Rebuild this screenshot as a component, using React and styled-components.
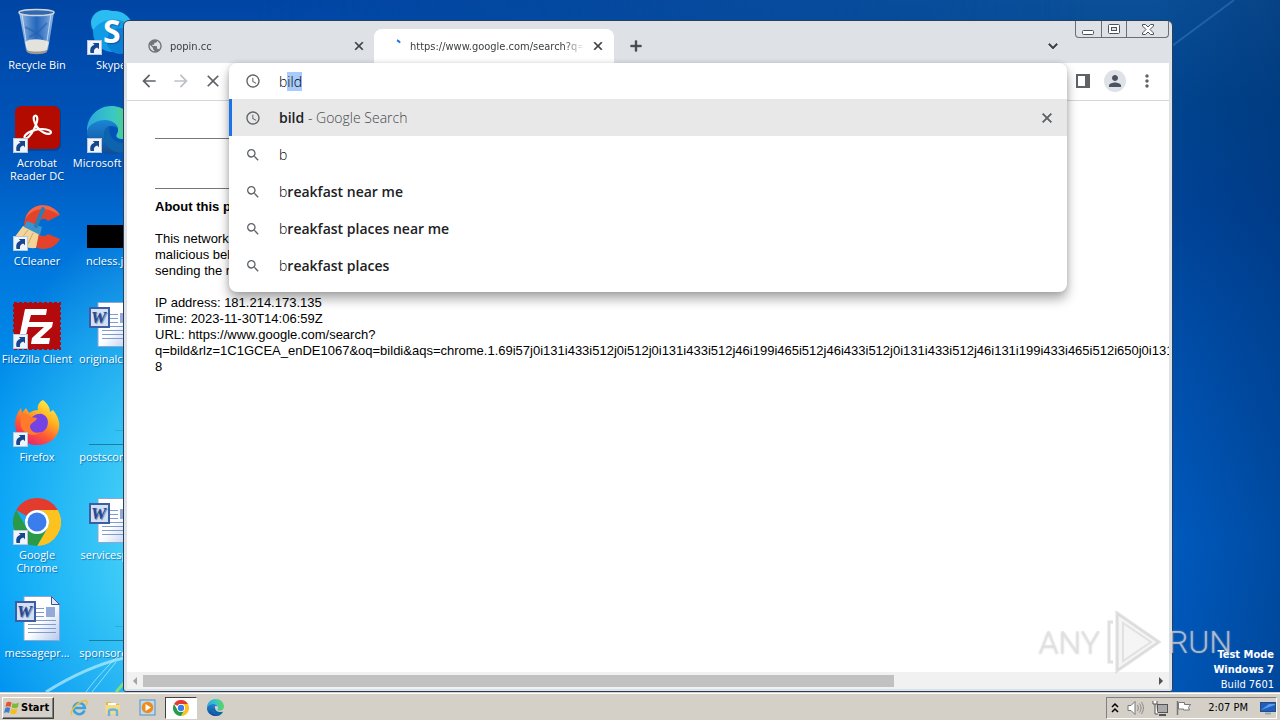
import { useEffect, useRef } from "react";
import styled, { createGlobalStyle } from "styled-components";
import {
  MdAccessTime,
  MdAdd,
  MdArrowBack,
  MdArrowForward,
  MdClose,
  MdExpandMore,
  MdMoreVert,
  MdPerson,
  MdPublic,
  MdSearch,
} from "react-icons/md";

const GlobalStyle = createGlobalStyle`
  * {
    box-sizing: border-box;
  }
  body {
    margin: 0;
    font-family: "DejaVu Sans Condensed", "DejaVu Sans", sans-serif;
    font-size: 11px;
  }
  button, input {
    font: inherit;
    color: inherit;
    border: 0;
    padding: 0;
    background: none;
  }
`;

const Screen = styled.div`
  display: flex;
  flex-direction: column;
  height: 100vh;
  overflow: hidden;
`;

// ---------- desktop ----------

const Desktop = styled.main`
  position: relative;
  flex: 1;
  min-height: 0;
  overflow: hidden;
  background:
    radial-gradient(ellipse 220px 330px at 190px 530px, #5fe0f8 0%, #45d0f6cc 40%, #00a0f800 100%),
    linear-gradient(180deg, #0045a4 0%, #0056bc 22%, #0073da 36%, #0088e8 50%, #009af4 66%, #00a0f8 85%, #0092f0 100%);

  /* the darker right side of the wallpaper */
  &::before {
    content: "";
    position: absolute;
    inset: 0;
    background:
      linear-gradient(90deg, #00000000 90%, #00286055 100%),
      linear-gradient(180deg, #0a4f98 0%, #004590 15%, #00449a 30%, #004fac 48%, #005cc2 78%, #0058ba 100%);
    mask-image: linear-gradient(90deg, transparent 20%, #000 85%);
  }
`;

const Rays = styled.svg`
  position: absolute;
  left: 0;
  bottom: 0;
`;

const Beam = styled.svg`
  position: absolute;
  right: 0;
  top: 0;
`;

const Shortcuts = styled.div`
  position: relative;
  display: grid;
  grid-template-columns: 74px 74px;
  grid-auto-rows: 98px;
  width: 148px;
`;

const Shortcut = styled.a`
  display: flex;
  flex-direction: column;
  align-items: center;
  gap: 2px;
  padding-top: 8px;
  color: #fff;
  font-family: "Open Sans", sans-serif;
  text-align: center;
  text-decoration: none;
  line-height: 13px;
  white-space: pre;
  text-shadow: 1px 1px 1px #003a8099;
  svg {
    display: block;
    flex: none;
  }
`;

const BuildInfo = styled.div`
  position: absolute;
  right: 6px;
  bottom: 0;
  color: #fff;
  line-height: 15px;
  text-align: right;
`;

const Watermark = styled.div`
  position: absolute;
  right: 48px;
  bottom: 18px;
  display: flex;
  align-items: center;
  gap: 4px;
  color: #dededeaa;
  font: 300 32px Roboto, "Liberation Sans", sans-serif;
  text-shadow: 0 0 2px #ffffff66, 0 1px 2px #00000033;
  pointer-events: none;
`;

// ---------- browser window ----------

const Window = styled.section`
  position: absolute;
  top: 20px;
  right: 107px;
  bottom: 0;
  left: 123px;
  display: flex;
  flex-direction: column;
  padding: 0 3px 2px;
  border: 1px solid #27405c;
  border-radius: 6px 6px 3px 3px;
  background: #dee1e6;
`;

const TabStrip = styled.div`
  display: flex;
  align-items: flex-end;
  height: 42px;
  padding-left: 7px;
`;

const Tab = styled.div`
  position: relative;
  display: flex;
  align-items: center;
  width: 240px;
  height: 34px;
  padding: 0 8px 0 13px;
  border-radius: 8px 8px 0 0;
  background: ${(p) => (p.$active ? "#fff" : "transparent")};
  color: #3c4043;
  svg {
    flex: none;
  }
`;

const TabTitle = styled.span`
  flex: 1;
  margin: 0 6px 0 7px;
  overflow: hidden;
  white-space: nowrap;
  mask-image: linear-gradient(90deg, #000 88%, transparent);
`;

const IconButton = styled.button`
  display: flex;
  align-items: center;
  justify-content: center;
  flex: none;
  width: ${(p) => p.$width || 32}px;
  height: ${(p) => p.$height || 32}px;
  color: ${(p) => p.$color || "#5f6368"};
  svg {
    stroke-width: ${(p) => (p.$heavy ? 1 : 0)};
  }
  path[fill="none"] {
    stroke: none;
  }
`;

const Spacer = styled.div`
  flex: 1;
`;

const WindowButtons = styled.div`
  display: flex;
  align-self: flex-start;
  margin-left: 8px;
  border: 1px solid #6b6e78;
  border-top: 0;
  border-radius: 0 0 4px 4px;
  button + button {
    border-left: 1px solid #6b6e78;
  }
  svg {
    stroke-width: 1;
  }
`;

const Toolbar = styled.div`
  display: flex;
  align-items: center;
  flex: none;
  height: 38px;
  padding: 0 6px 1px;
  border-bottom: 1px solid #d5d7da;
  background: #fff;
`;

const Avatar = styled.span`
  display: flex;
  align-items: center;
  justify-content: center;
  width: 22px;
  height: 22px;
  border-radius: 50%;
  background: #dee1e6;
  color: #4a5160;
`;

const Omnibox = styled.div`
  position: relative;
  align-self: stretch;
  flex: 1;
`;

const Popup = styled.div`
  position: absolute;
  z-index: 2;
  top: 0;
  right: 0;
  left: 0;
  padding-bottom: 8px;
  border-radius: 8px;
  background: #fff;
  box-shadow: 0 7px 12px #00000055, 0 0 5px #00000022;
  font-family: "Open Sans", sans-serif;
  font-size: 14px;
  font-weight: 300;
  color: #000;
`;

const SearchRow = styled.label`
  display: flex;
  align-items: center;
  gap: 18px;
  height: 36px;
  padding-left: 16px;
  color: #5f6368;
`;

const SearchInput = styled.input`
  flex: 1;
  color: #000;
  outline: none;
  &::selection {
    background: #a8cbfbfe;
    color: #000;
  }
`;

const Suggestion = styled.div`
  display: flex;
  align-items: center;
  gap: 18px;
  height: 37px;
  padding: 0 4px 0 13px;
  border-left: 3px solid ${(p) => (p.$selected ? "#1a73e8" : "transparent")};
  background: ${(p) => (p.$selected ? "#e8e8e8" : "transparent")};
  svg {
    flex: none;
    color: #5f6368;
  }
`;

const SuggestionText = styled.span`
  flex: 1;
  b {
    font-weight: 600;
    color: #202124;
  }
  small {
    font-size: 14px;
    color: #44474b;
  }
`;

const Page = styled.article`
  flex: 1;
  min-height: 0;
  padding: 37px 0 0 28px;
  overflow: hidden;
  background: #fff;
  color: #000;
  font: 13px/16px "Liberation Sans", Arial, sans-serif;
  white-space: nowrap;
`;

const Rule = styled.hr`
  width: 400px;
  height: 1px;
  margin: 0 0 ${(p) => p.$after}px;
  border: 0;
  background: #777;
`;

const Paragraph = styled.p`
  margin: 0 0 16px;
`;

const ScrollBar = styled.div`
  display: flex;
  align-items: center;
  justify-content: space-between;
  flex: none;
  height: 17px;
  background: #f1f1f1;
`;

const Track = styled.div`
  flex: 1;
  height: 12px;
`;

const Thumb = styled.div`
  width: 74.4%;
  height: 100%;
  background: #c1c1c1;
`;

// ---------- taskbar ----------

const Taskbar = styled.footer`
  display: flex;
  align-items: center;
  flex: none;
  height: 28px;
  padding: 2px 3px 0 2px;
  border-top: 1px solid #d4d0c8;
  box-shadow: inset 0 1px #fff;
  background: #d4d0c8;
`;

const StartButton = styled.button`
  display: flex;
  align-items: center;
  gap: 1px;
  width: 52px;
  height: 22px;
  margin-right: 8px;
  padding-left: 1px;
  border: 1px solid;
  border-color: #fff #404040 #404040 #fff;
  box-shadow: inset -1px -1px #808080;
  font-weight: bold;
  color: #000;
`;

const TaskButton = styled.button`
  display: flex;
  align-items: center;
  justify-content: center;
  width: 32px;
  height: 22px;
  margin: 0 1px;
  border: 1px solid;
  border-color: ${(p) => (p.$pressed ? "#404040 #fff #fff #404040" : "transparent")};
  background: ${(p) => (p.$pressed ? "#fff" : "none")};
`;

const Tray = styled.div`
  display: flex;
  align-items: center;
  height: 22px;
  gap: 8px;
  padding-left: 4px;
  border: 1px solid;
  border-color: #808080 #fff #fff #808080;
  color: #000;
`;

const Clock = styled.time`
  margin: 0 4px 0 8px;
`;

// ---------- icons ----------

const ShortcutArrow = () => (
  <g>
    <rect x="0.5" y="32.5" width="14" height="14" fill="#eef4fb" stroke="#b9c6d6" />
    <path d="M3.5 45c-1-5 1-7.500 4-8.300L5.800 35H12v6.300l-1.800-1.700c-2.400.6-3.700 2.400-3.200 5.400z" fill="#17468f" />
  </g>
);

const BinIcon = () => (
  <svg width="48" height="48" viewBox="0 0 48 48">
    <defs>
      <linearGradient id="bin" x1="0" x2="1">
        <stop offset="0" stopColor="#b9d4ef" stopOpacity="0.9" />
        <stop offset="0.5" stopColor="#3c7cc9" stopOpacity="0.6" />
        <stop offset="1" stopColor="#a4c6ea" stopOpacity="0.9" />
      </linearGradient>
    </defs>
    <path d="M6 4h35l-6 38c-3 4-19 4-22 0z" fill="url(#bin)" />
    <path d="M12 34c5-4 18-3 24 0l-2 8c-4 3-17 3-20 0z" fill="#e4e2dc" />
    <path d="M13 42c5 2 16 2 21 0v2c-4 3-17 3-20 0z" fill="#9b9892" />
    <path d="M12 19l12 6 10-10M16 29l8-4 6 6" fill="none" stroke="#235ca8" strokeWidth="2" opacity="0.5" />
    <path d="M9 6l5 34M38 6l-5 34" stroke="#e5f1fc" strokeWidth="1" opacity="0.7" />
    <ellipse cx="23.500" cy="4.500" rx="17.500" ry="3" fill="#3468ae" stroke="#cfd6dd" strokeWidth="1.500" />
  </svg>
);

const SkypeIcon = () => (
  <svg width="48" height="48" viewBox="0 0 48 48">
    <circle cx="17" cy="15" r="13" fill="#1ca8ea" />
    <circle cx="26" cy="24" r="20" fill="#0f9be6" />
    <circle cx="33" cy="33" r="13" fill="#0a80d8" />
    <path d="M4 14C6 4 16 0 25 3c10-1 18 5 21 14C30 9 16 9 6 22z" fill="#2bbcf2" />
    <text x="16" y="35" fill="#fff" fontFamily="Open Sans, sans-serif" fontWeight="700" fontSize="32">S</text>
    <ShortcutArrow />
  </svg>
);

const AcrobatIcon = () => (
  <svg width="48" height="48" viewBox="0 0 48 48">
    <rect x="3" y="1" width="45" height="44" rx="6" fill="#00306b" opacity="0.4" />
    <rect x="2" y="0" width="45" height="43" rx="6" fill="#b30b00" />
    <path
      d="M22.500 9.500C19 10 21 17 24.500 21.500S34 29 37 27.500 36 23 29 23s-14 3-16.500 6 0 5 3.500 1.500 7-11 8-15-.5-6-1.500-6z"
      fill="none"
      stroke="#fff"
      strokeWidth="2.200"
    />
    <ShortcutArrow />
  </svg>
);

const EdgeIcon = ({ size = 48, arrow }) => (
  <svg width={size} height={size} viewBox="0 0 48 48">
    <defs>
      <linearGradient id="edgeTop" x1="0" x2="1">
        <stop offset="0" stopColor="#2aa7dc" />
        <stop offset="0.55" stopColor="#3bc8c2" />
        <stop offset="1" stopColor="#5cd45a" />
      </linearGradient>
      <linearGradient id="edgeLow" x1="0" x2="0" y1="0" y2="1">
        <stop offset="0" stopColor="#1b85d6" />
        <stop offset="1" stopColor="#114a92" />
      </linearGradient>
    </defs>
    <path d="M0 24C0 11 11 0 24 0c14 0 24 10 24 21 0 8-6 12-12 12-5 0-8-2-6-5 4-7-3-13-11-13C9 15 0 20 0 30z" fill="url(#edgeTop)" />
    <path d="M0 25c2-7 10-11 18-11 7 0 12 4 13 9-1-2-4-3-7-3-5 0-7 5-7 10 0 8 7 15 18 17-15 5-36-4-35-22z" fill="url(#edgeLow)" />
    <path d="M17 30c0-5 2-9 6-10-3 7 3 17 13 17 4 0 8-2 9-1-2 5-6 9-12 11-9-1-16-8-16-17z" fill="#0e63ad" />
    {arrow && <ShortcutArrow />}
  </svg>
);

const CCleanerIcon = () => (
  <svg width="48" height="48" viewBox="0 0 48 48">
    <path d="M47 11C38-3 17-2 12 15c-4 14 4 29 18 30 8 0 14-4 17-10l-12-5c-4 4-10 2-11-4-2-8 6-15 11-9z" fill="#e3432b" />
    <path d="M47 11C38-3 17-2 12 15c7-10 18-13 29-7z" fill="#f0684c" />
    <path d="M10 22l16 7-3 15C14 45 6 41 1 34z" fill="#f3d59b" />
    <path d="M8 35l7-9M15 40l5-11" stroke="#d3a95d" strokeWidth="1" />
    <path d="M14 17l15 6-2 8-16-8z" fill="#3a93cc" />
    <path d="M30 5L23 22" stroke="#2c7cb6" strokeWidth="4" strokeLinecap="round" />
    <ShortcutArrow />
  </svg>
);

const PictureIcon = () => (
  <svg width="48" height="48" viewBox="0 0 48 48">
    <rect y="21" width="48" height="23" fill="#000" />
  </svg>
);

const FileZillaIcon = () => (
  <svg width="48" height="48" viewBox="0 0 48 48">
    <rect x="1" y="1" width="46" height="46" fill="#b20a0d" stroke="#b20a0d" strokeWidth="2" strokeDasharray="3 2" />
    <path d="M12 7h22l-1 6H18l-2 7h12l-1 5H15l-4 16H5z" fill="#fff" />
    <path d="M24 20h16l-1 5-12 11h10l-1 6H18l1-6 12-11h-8z" fill="#fff" />
    <ShortcutArrow />
  </svg>
);

const WordIcon = () => (
  <svg width="48" height="48" viewBox="0 0 48 48">
    <defs>
      <linearGradient id="sheet" x1="0" x2="1" y1="0" y2="1">
        <stop offset="0.500" stopColor="#fff" />
        <stop offset="1" stopColor="#b5c8ec" />
      </linearGradient>
    </defs>
    <path d="M11 .5h28l7.500 8V44.500H11z" fill="url(#sheet)" stroke="#8fa6d2" />
    <path d="M38.500.5v8h8z" fill="#dce6f7" stroke="#35579a" />
    <path d="M22 12.500h9M22 16.500h9M22 20.500h9M15 24.500h28M15 28.500h28M15 32.500h28M15 36.500h28" stroke="#7f9bd0" />
    <rect x="33" y="11" width="9" height="10" fill="#93a9d6" />
    <rect x="3" y="6" width="19" height="19" fill="#d5e0f4" stroke="#3b5ea5" strokeWidth="2" />
    <text x="4" y="21" fill="#27488f" fontFamily="Liberation Serif, serif" fontStyle="italic" fontWeight="700" fontSize="17">W</text>
  </svg>
);

const BlankIcon = () => (
  <svg width="48" height="48" viewBox="0 0 48 48">
    <path d="M2 44.500h46" stroke="#1c7d9c" />
    <path d="M28 30.500h20" stroke="#1c9cc4" opacity="0.5" />
  </svg>
);

const FirefoxIcon = () => (
  <svg width="48" height="48" viewBox="0 0 48 48">
    <defs>
      <linearGradient id="fox" x1="0.800" y1="0" x2="0.200" y2="1">
        <stop offset="0" stopColor="#fff44f" />
        <stop offset="0.350" stopColor="#ffb01f" />
        <stop offset="0.650" stopColor="#ff5a35" />
        <stop offset="1" stopColor="#e3187a" />
      </linearGradient>
    </defs>
    <path d="M30 0c5 4 7 8 7 12l3-2c5 6 7 12 6 19-2 10-11 16-22 16S2 37 2 24c0-6 2-11 6-16l1 5 4-5 3 5c3-2 6-3 9-3-1-4 1-8 5-10z" fill="url(#fox)" />
    <path d="M16 22c2-6 8-9 13-8 6 2 7 8 5 13-3 7-13 8-18 2-2-3-2-5 0-7z" fill="#7542e5" />
    <path d="M8 13c5 0 8 2 10 4l6 1c-1 4-6 4-7 8 0 6 6 8 11 6-7 6-18 2-20-6-1-5 0-9 0-13z" fill="#ff7a2b" />
    <ShortcutArrow />
  </svg>
);

const ChromeIcon = ({ size = 48, arrow }) => (
  <svg width={size} height={size} viewBox="0 0 48 48">
    <path d="M3.200 12A24 24 0 0 1 44.800 12H24a12 12 0 0 0-10.400 6z" fill="#e33b2e" />
    <path d="M44.800 12A24 24 0 0 1 24 48l10.400-18A12 12 0 0 0 24 12z" fill="#fcc31e" />
    <path d="M24 48A24 24 0 0 1 3.200 12l10.400 18A12 12 0 0 0 34.400 30z" fill="#2b9a48" />
    <circle cx="24" cy="24" r="12" fill="#fff" />
    <circle cx="24" cy="24" r="9.500" fill="#3b7ded" />
    {arrow && <ShortcutArrow />}
  </svg>
);

const FlagLogo = () => (
  <svg width="16" height="16" viewBox="0 0 16 16">
    <path d="M2.500 2.500C4 1.500 6 1.500 7.500 2.500L6.500 7C5 6 3 6 1.500 7z" fill="#e8532b" />
    <path d="M8.500 3C10 4 13 4 15 2.500L13.800 7.300C12 8.500 9.500 8.500 7.500 7.300z" fill="#7fb93c" />
    <path d="M1.200 8.200C3 7 5 7.200 6.200 8.200L5 13C4 12 1.500 12 0 13z" fill="#3a7fd5" />
    <path d="M7.200 8.600C9 9.700 12 9.700 13.500 8.600L12.200 13.300C10 14.500 7.500 14.300 6 13.300z" fill="#f6bd1f" />
  </svg>
);

const IEIcon = () => (
  <svg width="18" height="18" viewBox="0 0 18 18">
    <path d="M14.500 11.500A5.600 5.600 0 1 1 14.800 9H5" fill="none" stroke="#39a3dd" strokeWidth="2.600" />
    <path d="M2 16C-1 13 7 3 15 1.500c3 0 2 3 1 4.500" fill="none" stroke="#e9c240" strokeWidth="1.400" />
  </svg>
);

const FolderIcon = () => (
  <svg width="18" height="18" viewBox="0 0 18 18">
    <path d="M2 3h5l1 2h7v9H2z" fill="#e0b94a" />
    <path d="M4 4h8v3H4z" fill="#fff" />
    <path d="M1 6h15l-1 9H2z" fill="#f3dc85" />
    <path d="M5 17v-5c0-2 8-2 8 0v5" fill="none" stroke="#6cb2e0" strokeWidth="2.500" />
  </svg>
);

const PlayerIcon = () => (
  <svg width="17" height="17" viewBox="0 0 17 17">
    <rect x="1" y="1" width="15" height="15" fill="#b9dcf4" stroke="#5b8fb8" />
    <circle cx="8.500" cy="8.500" r="5.800" fill="#f18a17" />
    <path d="M6.500 5l5.500 3.500L6.500 12z" fill="#fff" />
  </svg>
);

const shortcuts = [
  { label: "Recycle Bin", icon: <BinIcon /> },
  { label: "Skype", icon: <SkypeIcon /> },
  { label: "Acrobat\nReader DC", icon: <AcrobatIcon /> },
  { label: "Microsoft Edge", icon: <EdgeIcon arrow /> },
  { label: "CCleaner", icon: <CCleanerIcon /> },
  { label: "ncless.jpg", icon: <PictureIcon /> },
  { label: "FileZilla Client", icon: <FileZillaIcon /> },
  { label: "originalcell...", icon: <WordIcon /> },
  { label: "Firefox", icon: <FirefoxIcon /> },
  { label: "postscontr...", icon: <BlankIcon /> },
  { label: "Google\nChrome", icon: <ChromeIcon arrow /> },
  { label: "servicespr...", icon: <WordIcon /> },
  { label: "messagepr...", icon: <WordIcon /> },
  { label: "sponsored...", icon: <BlankIcon /> },
];

const suggestions = ["", "reakfast near me", "reakfast places near me", "reakfast places"];

const Tabs = () => (
  <TabStrip>
    <Tab>
      <MdPublic size={16} color="#70757a" />
      <TabTitle>popin.cc</TabTitle>
      <IconButton $heavy $width={14} $height={16} $color="#3c4043" aria-label="Close tab">
        <MdClose size={14} />
      </IconButton>
    </Tab>
    <Tab $active>
      <svg width="16" height="14" viewBox="0 0 16 14">
        <path d="M10 1.300a6 6 0 0 1 3 2.500" fill="none" stroke="#1a73e8" strokeWidth="2" />
      </svg>
      <TabTitle>https://www.google.com/search?q=bild</TabTitle>
      <IconButton $heavy $width={16} $height={16} $color="#3c4043" aria-label="Close tab">
        <MdClose size={14} />
      </IconButton>
    </Tab>
    <IconButton $heavy $width={44} $height={34} $color="#3c4043" aria-label="New tab">
      <MdAdd size={18} />
    </IconButton>
    <Spacer />
    <IconButton $heavy $width={28} $height={34} $color="#3c4043" aria-label="Search tabs">
      <MdExpandMore size={18} />
    </IconButton>
    <WindowButtons>
      <IconButton $width={25} $height={16} aria-label="Minimize">
        <svg width="13" height="11" viewBox="0 0 13 11">
          <rect x="0.500" y="6.500" width="11" height="4" rx="1" fill="#fff" stroke="#4d515c" />
        </svg>
      </IconButton>
      <IconButton $width={25} $height={16} aria-label="Maximize">
        <svg width="13" height="11" viewBox="0 0 13 11">
          <rect x="0.500" y="0.500" width="11" height="9" rx="1" fill="#fff" stroke="#4d515c" />
          <rect x="3.500" y="3.500" width="5" height="3" fill="#dee1e6" stroke="#4d515c" />
        </svg>
      </IconButton>
      <IconButton $width={42} $height={16} aria-label="Close">
        <svg width="12" height="11" viewBox="0 0 12 11">
          <path d="M.5.5h3L6 3 8.500.5h3v1.500L8 5.500 11.500 9v1.500h-3L6 8l-2.500 2.500h-3V9L4 5.500.5 2z" fill="#fff" stroke="#4d515c" />
        </svg>
      </IconButton>
    </WindowButtons>
  </TabStrip>
);

const AddressBar = () => {
  const inputRef = useRef(null);

  // inline completion: what was typed stays plain, the rest is selected
  useEffect(() => {
    inputRef.current.focus();
    inputRef.current.setSelectionRange(1, 4);
  }, []);

  return (
    <Omnibox>
      <Popup>
        <SearchRow>
          <MdAccessTime size={16} />
          <SearchInput ref={inputRef} defaultValue="bild" aria-label="Address and search bar" />
        </SearchRow>
        <Suggestion $selected>
          <MdAccessTime size={16} />
          <SuggestionText>
            <b>bild</b> <small>- Google Search</small>
          </SuggestionText>
          <IconButton $heavy aria-label="Remove suggestion">
            <MdClose size={16} />
          </IconButton>
        </Suggestion>
        {suggestions.map((rest) => (
          <Suggestion key={rest}>
            <MdSearch size={16} />
            <SuggestionText>
              b<b>{rest}</b>
            </SuggestionText>
          </Suggestion>
        ))}
      </Popup>
    </Omnibox>
  );
};

const Browser = () => (
  <Window>
    <Tabs />
    <Toolbar>
      <IconButton aria-label="Back">
        <MdArrowBack size={20} />
      </IconButton>
      <IconButton $color="#bdc1c6" aria-label="Forward">
        <MdArrowForward size={20} />
      </IconButton>
      <IconButton aria-label="Stop">
        <MdClose size={20} />
      </IconButton>
      <AddressBar />
      <IconButton aria-label="Side panel">
        <svg width="14" height="14" viewBox="0 0 14 14">
          <path d="M0 0h14v14H0zM2 2v10h7V2z" fill="#5f6368" fillRule="evenodd" />
        </svg>
      </IconButton>
      <IconButton aria-label="Profile">
        <Avatar>
          <MdPerson size={18} />
        </Avatar>
      </IconButton>
      <IconButton aria-label="Menu">
        <MdMoreVert size={20} />
      </IconButton>
    </Toolbar>
    <Page>
      <Rule $after={49} />
      <Rule $after={10} />
      <Paragraph>
        <b>About this page</b>
      </Paragraph>
      <Paragraph>
        This network is blocked due to unaddressed abuse complaints about
        <br />
        malicious behavior. This page checks to see if it's really a human
        <br />
        sending the requests, and not a robot, coming from this network.
      </Paragraph>
      <Paragraph>
        IP address: 181.214.173.135
        <br />
        Time: 2023-11-30T14:06:59Z
        <br />
        URL: https://www.google.com/search?
        <br />
        q=bild&amp;rlz=1C1GCEA_enDE1067&amp;oq=bildi&amp;aqs=chrome.1.69i57j0i131i433i512j0i512j0i131i433i512j46i199i465i512j46i433i512j0i131i433i512j46i131i199i433i465i512i650j0i131i433i512
        <br />8
      </Paragraph>
    </Page>
    <ScrollBar>
      <svg width="16" height="16" viewBox="0 0 16 16">
        <path d="M10 4v8L6 8z" fill="#a3a3a3" />
      </svg>
      <Track>
        <Thumb />
      </Track>
      <svg width="16" height="16" viewBox="0 0 16 16">
        <path d="M6 4v8l4-4z" fill="#505050" />
      </svg>
    </ScrollBar>
  </Window>
);

const App = () => {
  return (
    <>
      <GlobalStyle />
      <Screen>
        <Desktop>
          <Rays width="124" height="60" viewBox="0 0 124 60">
            <path d="M46 60C70 45 98 32 124 26" fill="none" stroke="#b8f0ff" strokeWidth="3" opacity="0.7" />
            <path d="M86 60C96 46 108 34 118 24M92 60l24-30" fill="none" stroke="#b8f0ff" opacity="0.7" />
            <path d="M116 60l8-9" stroke="#7be07b" strokeWidth="3" />
          </Rays>
          <Beam width="108" height="50" viewBox="0 0 108 50">
            <path d="M0 46L62 0" stroke="#5e9ad0" strokeWidth="2" opacity="0.3" />
          </Beam>
          <Shortcuts>
            {shortcuts.map((s) => (
              <Shortcut key={s.label} href="#">
                {s.icon}
                {s.label}
              </Shortcut>
            ))}
          </Shortcuts>
          <Browser />
          <Watermark>
            ANY
            <svg width="60" height="64" viewBox="0 0 60 64">
              <path d="M13 3L55 32 13 61V3z" fill="#d8d8d844" stroke="#c4c4c488" strokeWidth="3" />
              <path d="M19 13l28 19-28 19V13z" fill="none" stroke="#c4c4c466" strokeWidth="2" />
              <path d="M9 12H5v40h4" fill="none" stroke="#c4c4c488" strokeWidth="3" />
            </svg>
            RUN
          </Watermark>
          <BuildInfo>
            <b>
              Test Mode
              <br />
              Windows 7
            </b>
            <br />
            Build 7601
          </BuildInfo>
        </Desktop>
        <Taskbar>
          <StartButton>
            <FlagLogo />
            Start
          </StartButton>
          <TaskButton aria-label="Internet Explorer">
            <IEIcon />
          </TaskButton>
          <TaskButton aria-label="Explorer">
            <FolderIcon />
          </TaskButton>
          <TaskButton aria-label="Media Player">
            <PlayerIcon />
          </TaskButton>
          <TaskButton $pressed aria-label="Google Chrome">
            <ChromeIcon size={16} />
          </TaskButton>
          <TaskButton aria-label="Microsoft Edge">
            <EdgeIcon size={17} />
          </TaskButton>
          <Spacer />
          <Tray>
            <svg width="8" height="12" viewBox="0 0 8 12">
              <path d="M1 5l3-3 3 3M1 10l3-3 3 3" fill="none" stroke="#000" strokeWidth="1.500" />
            </svg>
            <svg width="17" height="16" viewBox="0 0 17 16">
              <path d="M1 5.500h3l4-4v13l-4-4H1z" fill="#fff" stroke="#777" />
              <path d="M10.500 5c1 2 1 4 0 6M12.500 3.500c2 3 2 6 0 9M14.500 2c2.500 4 2.500 8 0 12" fill="none" stroke="#888" />
            </svg>
            <svg width="16" height="16" viewBox="0 0 16 16">
              <rect x="5.500" y="4.500" width="10" height="8" fill="#aaa" stroke="#555" />
              <path d="M7 15h7" stroke="#555" strokeWidth="2" />
              <path d="M1 1v3h4V1M3 4v10h3" fill="#fff" stroke="#555" />
            </svg>
            <svg width="16" height="16" viewBox="0 0 16 16">
              <path d="M1.500 1v14" stroke="#777" strokeWidth="1.500" />
              <path d="M2.500 2.500h6v2h6l-2 3 1 2.500H7.500V9h-5z" fill="#fff" stroke="#777" />
            </svg>
            <Clock>2:07 PM</Clock>
            <svg width="16" height="14" viewBox="0 0 16 14">
              <rect x="0.500" y="1.500" width="15" height="9" fill="#1d5fc0" stroke="#2b4a80" />
              <path d="M1 9l8-6h6v1z" fill="#5d9be6" />
              <path d="M5 12.500h6" stroke="#8ab" strokeWidth="2" />
            </svg>
          </Tray>
        </Taskbar>
      </Screen>
    </>
  );
};

export default App;
